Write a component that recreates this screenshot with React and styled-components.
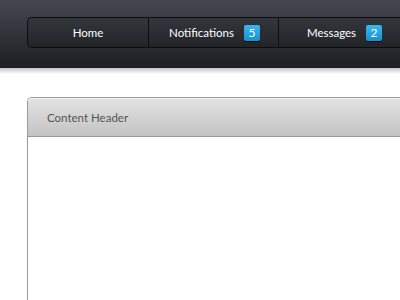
import React from 'react'
import styled, { createGlobalStyle } from 'styled-components'

const Global = createGlobalStyle`
  html, body {
    margin: 0;
    padding: 0;
    background: #fff;
    overflow: hidden;
  }
  body {
    font-family: Lato, "Open Sans", sans-serif;
  }
`

const Page = styled.div`
  width: 400px;
  height: 300px;
  overflow: hidden;
`

const TopBar = styled.div`
  height: 68px;
  box-sizing: border-box;
  padding: 17px 0 0 27px;
  background: linear-gradient(#44484f, #1d1e22);
  display: flex;
`

const Nav = styled.ul`
  display: flex;
  margin: 0;
  padding: 0;
  list-style: none;
  height: 31px;
  box-sizing: border-box;
  border: 1px solid #0c0d0f;
  border-right: none;
  border-radius: 5px 0 0 5px;
  background: linear-gradient(#33363c, #222428);
  flex-shrink: 0;
`

const NavItem = styled.li`
  width: ${p => p.w}px;
  display: flex;
  align-items: center;
  justify-content: center;
  gap: 10px;
  padding-left: ${p => (p.first ? 0 : 2)}px;
  color: #fff;
  font-size: 11.5px;
  border-left: ${p => (p.first ? 'none' : '1px solid #0c0d0f')};
  box-sizing: border-box;
`

const Badge = styled.span`
  width: 16px;
  height: 16px;
  border-radius: 2px;
  background: linear-gradient(#3ab8ee, #1690d2);
  box-shadow: 0 1px 0 rgba(0, 0, 0, 0.7);
  display: flex;
  align-items: center;
  justify-content: center;
  font-size: 12px;
  color: #fff;
`

const Shade = styled.div`
  height: 6px;
  background: linear-gradient(#c4c4c4, #ffffff);
`

const Main = styled.div`
  padding: 23px 0 0 27px;
`

const Panel = styled.div`
  border: 1px solid #9a9a9a;
  border-right: none;
  border-bottom: none;
  border-radius: 5px 0 0 0;
  height: 260px;
  background: #fff;
`

const PanelHeader = styled.div`
  height: 39px;
  box-sizing: border-box;
  border-bottom: 1px solid #9a9a9a;
  border-radius: 4px 0 0 0;
  background: linear-gradient(#e3e3e3, #c3c3c3);
  box-shadow: inset 0 1px 0 #f2f2f2;
  display: flex;
  align-items: center;
  padding-left: 19px;
  color: #555;
  font-size: 11.5px;
`

const items = [
  { label: 'Home', w: 120 },
  { label: 'Notifications', w: 130, count: 5 },
  { label: 'Messages', w: 130, count: 2 },
]

export default function App() {
  return (
    <Page>
      <Global />
      <TopBar>
        <Nav>
          {items.map((it, i) => (
            <NavItem key={it.label} w={it.w} first={i === 0}>
              {it.label}
              {it.count != null && <Badge>{it.count}</Badge>}
            </NavItem>
          ))}
        </Nav>
      </TopBar>
      <Shade />
      <Main>
        <Panel>
          <PanelHeader>Content Header</PanelHeader>
        </Panel>
      </Main>
    </Page>
  )
}
